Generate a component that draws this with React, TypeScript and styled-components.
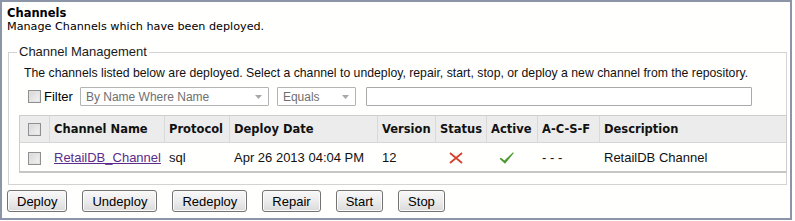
import React from 'react';
import styled, { createGlobalStyle } from 'styled-components';

const GlobalStyle = createGlobalStyle`
  * {
    box-sizing: border-box;
  }
  body {
    margin: 0;
    background: #ffffff;
    font-family: 'Liberation Sans', Arial, sans-serif;
  }
`;

const Frame = styled.div`
  width: 792px;
  height: 220px;
  border: 2px solid #8b95a7;
  padding: 4px 3px 0 5px;
  background: #fffffe;
`;

const Title = styled.div`
  font-family: 'DejaVu Sans', Verdana, sans-serif;
  font-weight: bold;
  font-size: 11.5px;
  line-height: 14px;
  color: #000;
`;

const Subtitle = styled.div`
  font-family: 'DejaVu Sans', Verdana, sans-serif;
  font-size: 11.2px;
  line-height: 13px;
  color: #000;
`;

const Fieldset = styled.fieldset`
  margin: 11px 0 0 1px;
  padding: 0 1px 11px 10px;
  border: 1px solid #d3d3d3;
  min-inline-size: 0;
`;

const Legend = styled.legend`
  margin-left: -2px;
  padding: 0 2px;
  font-size: 13px;
  line-height: 16px;
  color: #1a1a1a;
`;

const Intro = styled.div`
  margin: 6px 0 0 5px;
  font-size: 12.25px;
  line-height: 15px;
  color: #111;
  white-space: nowrap;
`;

const FilterRow = styled.div`
  display: flex;
  align-items: center;
  height: 19px;
  margin-top: 6px;
  padding-left: 9px;
`;

const FilterLabel = styled.label`
  display: flex;
  align-items: center;
  gap: 3px;
  font-size: 13px;
  color: #000;
  margin-right: 7px;
`;

const Check = styled.input.attrs({ type: 'checkbox' })`
  appearance: none;
  margin: 0;
  width: 13px;
  height: 13px;
  border: 1px solid #8f8f8f;
  box-shadow: inset 0 0 0 1px #e2e2e2;
  background: linear-gradient(135deg, #d6d6d6 0%, #f4f4f4 100%);
`;

const Select = styled.div<{ $width: number; $gap: number }>`
  display: flex;
  align-items: center;
  justify-content: space-between;
  width: ${(p) => p.$width}px;
  height: 19px;
  border: 1px solid #b4b4b4;
  border-radius: 1px;
  padding: 0 6px 0 5px;
  margin-right: ${(p) => p.$gap}px;
  font-size: 12px;
  color: #6f6f6f;
  background: #fff;
`;

const TextBox = styled.div`
  width: 386px;
  height: 19px;
  border: 1px solid #a9a9a9;
  border-radius: 1px;
  background: #fff;
`;

const Table = styled.table`
  width: 100%;
  margin-top: 9px;
  table-layout: fixed;
  border-collapse: separate;
  border-spacing: 0;
  border: 1px solid #cdcdcd;
  border-bottom: 2px solid #c6c6c6;
`;

const Th = styled.th<{ $width: number }>`
  width: ${(p) => p.$width}px;
  height: 27px;
  padding: 0 4px;
  text-align: left;
  font-family: 'DejaVu Sans', Verdana, sans-serif;
  font-size: 11.5px;
  font-weight: bold;
  color: #111;
  white-space: nowrap;
  overflow: hidden;
  background: #ececec;
  border-bottom: 1px solid #d6d6d6;
  border-left: 1px solid #d9d9d9;
  &:first-child {
    border-left: none;
    text-align: center;
  }
`;

const Td = styled.td<{ $center?: boolean }>`
  height: 28px;
  padding: ${(p) => (p.$center ? '0 10px 0 0' : '0 5px')};
  text-align: ${(p) => (p.$center ? 'center' : 'left')};
  font-size: 13px;
  color: #111;
  white-space: nowrap;
  &:first-child {
    padding: 0;
    text-align: center;
  }
`;

const CellBox = styled.span`
  display: inline-flex;
  vertical-align: middle;
`;

const ChannelLink = styled.a`
  color: #5b2c8c;
  text-decoration: underline;
`;

const ButtonBar = styled.div`
  display: flex;
  gap: 15px;
  margin-top: 5px;
`;

const Button = styled.button`
  height: 22px;
  padding: 1px 9px 0;
  border: 1px solid #737373;
  border-radius: 3px;
  background: linear-gradient(#f8f8f8 0%, #ececec 50%, #dadada 100%);
  box-shadow: inset 0 0 0 1px #fbfbfb;
  font-family: 'Liberation Sans', Arial, sans-serif;
  font-size: 13px;
  color: #000;
`;

const Arrow = () => (
  <svg width="7" height="4" viewBox="0 0 7 4">
    <path d="M0 0 H7 L3.5 4 Z" fill="#a8a8a8" />
  </svg>
);

const Cross = () => (
  <svg width="14" height="12" viewBox="0 0 14 12">
    <path d="M1 1 L13 11 M13 1 L1 11" stroke="#d4402b" strokeWidth="1.8" />
  </svg>
);

const Tick = () => (
  <svg width="15" height="12" viewBox="0 0 15 12">
    <path d="M0.5 6.8 L2 5.8 L5.4 8.6 L14 0.3 L14.8 1 L6 11.8 Z" fill="#4a9a2d" />
  </svg>
);

const columns = [
  { label: '', width: 29 },
  { label: 'Channel Name', width: 115 },
  { label: 'Protocol', width: 65 },
  { label: 'Deploy Date', width: 148 },
  { label: 'Version', width: 58 },
  { label: 'Status', width: 51 },
  { label: 'Active', width: 51 },
  { label: 'A-C-S-F', width: 62 },
  { label: 'Description', width: 187 },
];

const actions = ['Deploy', 'Undeploy', 'Redeploy', 'Repair', 'Start', 'Stop'];

const App = () => (
  <>
    <GlobalStyle />
    <Frame>
      <Title>Channels</Title>
      <Subtitle>Manage Channels which have been deployed.</Subtitle>
      <Fieldset>
        <Legend>Channel Management</Legend>
        <Intro>
          The channels listed below are deployed. Select a channel to undeploy, repair, start,
          stop, or deploy a new channel from the repository.
        </Intro>
        <FilterRow>
          <FilterLabel>
            <Check />
            Filter
          </FilterLabel>
          <Select $width={189} $gap={8}>
            By Name Where Name
            <Arrow />
          </Select>
          <Select $width={79} $gap={10}>
            Equals
            <Arrow />
          </Select>
          <TextBox />
        </FilterRow>
        <Table>
          <thead>
            <tr>
              {columns.map((col) => (
                <Th key={col.label || 'select'} $width={col.width}>
                  {col.label ? col.label : (
                    <CellBox>
                      <Check />
                    </CellBox>
                  )}
                </Th>
              ))}
            </tr>
          </thead>
          <tbody>
            <tr>
              <Td>
                <CellBox>
                  <Check />
                </CellBox>
              </Td>
              <Td>
                <ChannelLink href="#">RetailDB_Channel</ChannelLink>
              </Td>
              <Td>sql</Td>
              <Td>Apr 26 2013 04:04 PM</Td>
              <Td>12</Td>
              <Td $center>
                <CellBox>
                  <Cross />
                </CellBox>
              </Td>
              <Td $center>
                <CellBox>
                  <Tick />
                </CellBox>
              </Td>
              <Td>- - -</Td>
              <Td>RetailDB Channel</Td>
            </tr>
          </tbody>
        </Table>
      </Fieldset>
      <ButtonBar>
        {actions.map((label) => (
          <Button key={label}>{label}</Button>
        ))}
      </ButtonBar>
    </Frame>
  </>
);

export default App;
